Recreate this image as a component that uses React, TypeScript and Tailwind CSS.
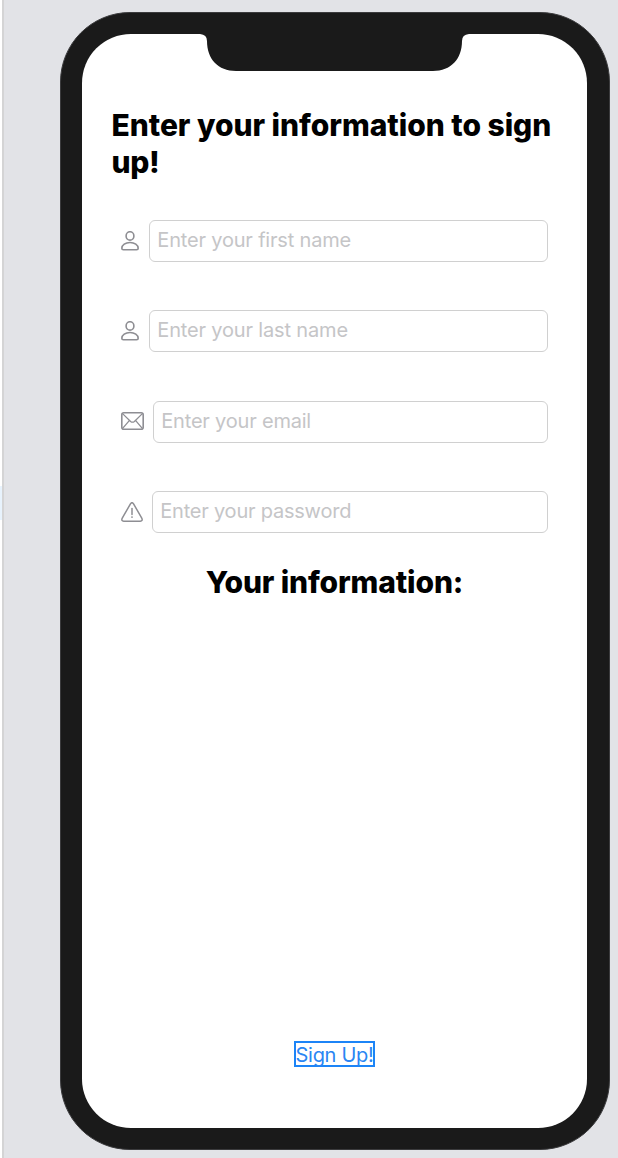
import type { ReactNode } from "react";

function PersonIcon() {
  return (
    <svg width="18" height="20" viewBox="0 0 18 20" fill="none" stroke="#8e8e93" strokeWidth="1.6">
      <ellipse cx="9" cy="4.9" rx="3.9" ry="4.2" />
      <path d="M2.4 18.7C1.2 18.7.8 18.1.8 17.2C1 14.2 4.3 11.5 9 11.5s8 2.7 8.2 5.7c0 .9-.4 1.5-1.6 1.5Z" />
    </svg>
  );
}

function MailIcon() {
  return (
    <svg className="-mt-px" width="23" height="18" viewBox="0 0 23 18" fill="none" stroke="#8e8e93" strokeWidth="1.6">
      <rect x="0.8" y="0.8" width="21.4" height="16.4" rx="2" />
      <path d="M1.3 1.4L9.6 9.4Q11.5 11 13.4 9.4L21.6 1.4M1.4 16.6L8.3 8.6M21.5 16.6L14.7 8.6" strokeWidth="1.3" />
    </svg>
  );
}

function WarningIcon() {
  return (
    <svg width="22" height="20" viewBox="0 0 22 20" fill="none" stroke="#8e8e93" strokeWidth="1.5">
      <path d="M9.6 1.6Q11 -.3 12.4 1.6L20.9 16.4Q21.9 19.1 19.3 19.2H2.7Q.1 19.1 1.1 16.4Z" strokeLinejoin="round" />
      <path d="M11 6.4V12.5" strokeLinecap="round" />
      <circle cx="11" cy="15.1" r=".9" fill="#8e8e93" stroke="none" />
    </svg>
  );
}

function Field({ icon, placeholder, tracking, gap }: { icon: ReactNode; placeholder: string; tracking: string; gap: string }) {
  return (
    <div className="flex h-[42px] items-center">
      {icon}
      <input
        placeholder={placeholder}
        className={`h-full min-w-0 flex-1 rounded-[6px] border-[1.5px] border-[#d0d0d0] bg-white px-[7.3px] pb-[2px] text-[20px] text-black outline-none placeholder:text-[#c5c5c7] ${gap} ${tracking}`}
      />
    </div>
  );
}

export default function App() {
  return (
    <div className="flex h-[1158px] w-[618px] overflow-hidden bg-[#e2e3e7] font-['Inter','Liberation_Sans',sans-serif]">
      <div className="w-[2px] bg-white pt-[486px]">
        <div className="h-[34px] bg-[#e8f3fd]" />
      </div>
      <div className="w-[2px] bg-[#d4d4d5]" />
      <div className="mt-[12px] ml-[56px] h-[1138px] w-[550px] shrink-0 rounded-[70px] border border-[#3b3b3d] bg-[#1a1a1a] p-[21px]">
        <div className="flex h-[1094px] w-[505px] flex-col rounded-[49px] bg-white">
          <svg className="ml-[118px] shrink-0" width="269" height="37" viewBox="0 0 269 37" fill="#1a1a1a">
            <path d="M0 0H269Q262 .5 262 7C262 25 251 37 233 37H36C18 37 7 25 7 7Q7 .5 0 0Z" />
          </svg>
          <h1 className="mt-[36px] ml-[29.5px] text-[30px] leading-[37px] font-extrabold tracking-[-0.04px] whitespace-nowrap text-black">
            Enter your information to sign
            <br />
            <span className="tracking-[-0.3px]">up!</span>
          </h1>
          <form className="mt-[39px] mr-[39px] ml-[39px] flex flex-col gap-[48.4px]">
            <Field icon={<PersonIcon />} placeholder="Enter your first name" tracking="tracking-[-0.18px]" gap="ml-[10px]" />
            <Field icon={<PersonIcon />} placeholder="Enter your last name" tracking="tracking-[-0.16px]" gap="ml-[10px]" />
            <Field icon={<MailIcon />} placeholder="Enter your email" tracking="tracking-[-0.2px]" gap="ml-[9px]" />
            <Field icon={<WarningIcon />} placeholder="Enter your password" tracking="tracking-[-0.22px]" gap="ml-[9px]" />
          </form>
          <h2 className="mt-[31px] text-center text-[30px] leading-[37px] font-extrabold tracking-[-0.14px] text-black">
            Your information:
          </h2>
          <div className="flex-1" />
          <button className="mb-[61px] flex h-[26px] w-[81px] items-center justify-center self-center border-2 border-[#1c84f7] pt-[2px] text-[20px] leading-[24px] tracking-[-0.3px] whitespace-nowrap text-[#2a86f3]">
            Sign Up!
          </button>
        </div>
      </div>
    </div>
  );
}
